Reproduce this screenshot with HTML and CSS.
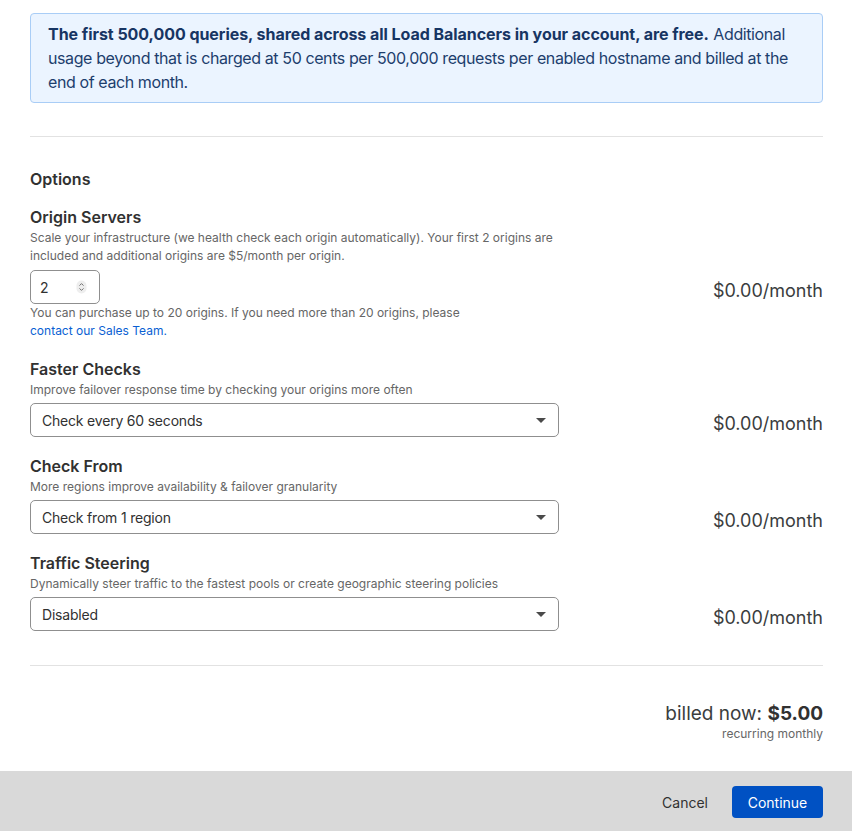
FILE: index.html
```html
<!DOCTYPE html>
<html lang="en">
<head>
<meta charset="utf-8">
<title>Load Balancing</title>
<link rel="stylesheet" href="styles.css">
</head>
<body>
<div class="page">
  <div class="content">
    <div class="notice">
      <strong>The first 500,000 queries, shared across all Load Balancers in your account, are free.</strong> <span class="notice-rest">Additional usage beyond that is charged at 50 cents per 500,000 requests per enabled hostname and billed at the end of each month.</span>
    </div>
    <hr class="divider divider-top">

    <h2 class="section-title">Options</h2>

    <div class="option">
      <h3 class="option-title">Origin Servers</h3>
      <p class="option-desc option-desc-tall">Scale your infrastructure (we health check each origin automatically). Your first 2 origins are<br>included and additional origins are $5/month per origin.</p>
      <div class="option-row">
        <div class="control">
          <div class="number-input">
            <span class="number-value">2</span>
            <svg class="spinner" width="11" height="14" viewBox="0 0 11 14"><rect x="0.5" y="0.5" width="10" height="13" rx="5" fill="#eeeeee"/><path d="M3.5 5.6 L5.5 3.6 L7.5 5.6" fill="none" stroke="#6f6f6f" stroke-width="1"/><path d="M3.5 8.4 L5.5 10.4 L7.5 8.4" fill="none" stroke="#6f6f6f" stroke-width="1"/></svg>
          </div>
        </div>
        <div class="price">$0.00/month</div>
      </div>
      <p class="option-help">You can purchase up to 20 origins. If you need more than 20 origins, please<br><a href="#" class="link">contact our Sales Team.</a></p>
    </div>

    <div class="option">
      <h3 class="option-title">Faster Checks</h3>
      <p class="option-desc">Improve failover response time by checking your origins more often</p>
      <div class="option-row">
        <div class="control">
          <div class="select"><span>Check every 60 seconds</span><span class="caret"></span></div>
        </div>
        <div class="price">$0.00/month</div>
      </div>
    </div>

    <div class="option">
      <h3 class="option-title">Check From</h3>
      <p class="option-desc">More regions improve availability &amp; failover granularity</p>
      <div class="option-row">
        <div class="control">
          <div class="select"><span>Check from 1 region</span><span class="caret"></span></div>
        </div>
        <div class="price">$0.00/month</div>
      </div>
    </div>

    <div class="option">
      <h3 class="option-title">Traffic Steering</h3>
      <p class="option-desc">Dynamically steer traffic to the fastest pools or create geographic steering policies</p>
      <div class="option-row">
        <div class="control">
          <div class="select"><span>Disabled</span><span class="caret"></span></div>
        </div>
        <div class="price">$0.00/month</div>
      </div>
    </div>

    <hr class="divider divider-bottom">

    <div class="total">
      <div class="total-amount">billed now: <strong>$5.00</strong></div>
      <div class="total-note">recurring monthly</div>
    </div>
  </div>

  <div class="footer">
    <button class="btn btn-cancel">Cancel</button>
    <button class="btn btn-primary">Continue</button>
  </div>
</div>
</body>
</html>
```

FILE: styles.css
```css
* { box-sizing: border-box; }

html, body {
  margin: 0;
  padding: 0;
  background: #ffffff;
}

body {
  font-family: Inter, "Noto Sans", "Liberation Sans", sans-serif;
  color: #313131;
}

.page {
  width: 852px;
  min-height: 831px;
  display: flex;
  flex-direction: column;
}

.content {
  padding: 13px 29px 0 30px;
  flex: 1;
}

.notice {
  background: #ebf4ff;
  border: 1px solid #a9cdf6;
  border-radius: 4px;
  padding: 8px 16px 8px 17px;
  font-size: 16px;
  line-height: 24px;
  color: #1d3e6d;
}

.notice strong {
  font-weight: 700;
  color: #173563;
  letter-spacing: -0.05px;
}

.notice-rest {
  letter-spacing: -0.4px;
}

.divider {
  border: 0;
  height: 1px;
  background: #e2e2e2;
  margin: 0;
}

.divider-top { margin-top: 33px; }
.divider-bottom { margin-top: 34px; }

.section-title {
  margin: 30px 0 14px;
  font-size: 16px;
  line-height: 24px;
  font-weight: 600;
  color: #313131;
}

.option {
  margin-bottom: 17px;
}

.option-title {
  margin: 0;
  font-size: 16px;
  line-height: 24px;
  font-weight: 600;
  color: #313131;
}

.option-desc,
.option-help {
  margin: 0;
  font-size: 12px;
  line-height: 18px;
  color: #666666;
}

.option-desc { margin-bottom: 4px; }
.option-desc-tall { margin-bottom: 5px; }

.option-row {
  display: flex;
  align-items: center;
  justify-content: space-between;
}

.control {
  width: 529px;
}

.number-input {
  width: 70px;
  height: 34px;
  border: 1px solid #8f8f8f;
  border-radius: 5px;
  display: flex;
  align-items: center;
  justify-content: space-between;
  padding: 0 12px 0 9px;
  font-size: 14px;
  color: #313131;
}

.spinner { display: block; }

.select {
  height: 34px;
  border: 1px solid #8f8f8f;
  border-radius: 5px;
  display: flex;
  align-items: center;
  justify-content: space-between;
  padding: 0 12px 0 11px;
  font-size: 14px;
  letter-spacing: -0.2px;
  color: #313131;
}

.caret {
  width: 0;
  height: 0;
  border-left: 5px solid transparent;
  border-right: 5px solid transparent;
  border-top: 5px solid #4a4a4a;
}

.price {
  font-size: 18px;
  line-height: 24px;
  color: #3a3d3e;
  margin-top: 8px;
}

.link {
  color: #0a5fd3;
  text-decoration: none;
}

.total {
  margin-top: 36px;
  margin-bottom: 29px;
  text-align: right;
}

.total-amount {
  font-size: 19px;
  line-height: 24px;
  color: #3a3d3e;
}

.total-amount strong {
  font-weight: 700;
  color: #313131;
}

.total-note {
  font-size: 12px;
  line-height: 16px;
  color: #666666;
}

.footer {
  height: 60px;
  background: #d9d9d9;
  display: flex;
  align-items: center;
  justify-content: flex-end;
  gap: 8px;
  padding: 0 29px 0 30px;
}

.btn {
  font-family: inherit;
  font-size: 14px;
  border: 0;
  border-radius: 4px;
  height: 32px;
  margin-top: 2px;
  cursor: pointer;
}

.btn-cancel {
  background: transparent;
  color: #313131;
  padding: 0 16px;
}

.btn-primary {
  background: #0051c3;
  color: #ffffff;
  width: 91px;
  padding: 0;
}
```
